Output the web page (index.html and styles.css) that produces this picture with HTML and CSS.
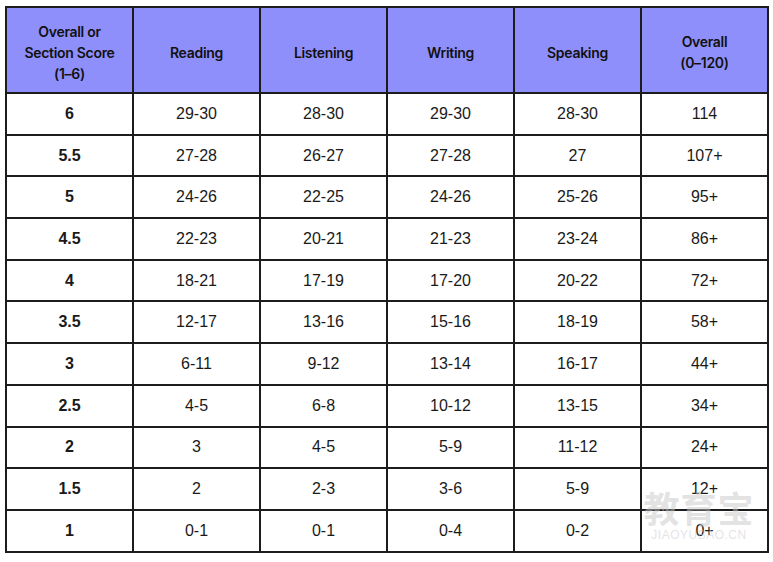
FILE: index.html
```html
<!DOCTYPE html>
<html>
<head>
<meta charset="utf-8">
<link rel="stylesheet" href="styles.css">
</head>
<body>
<div class="wrap">
<table class="scores">
<thead>
<tr>
<th>Overall or<br>Section Score<br>(1–6)</th>
<th>Reading</th>
<th>Listening</th>
<th>Writing</th>
<th>Speaking</th>
<th>Overall<br>(0–120)</th>
</tr>
</thead>
<tbody>
<tr><td class="band">6</td><td>29-30</td><td>28-30</td><td>29-30</td><td>28-30</td><td>114</td></tr>
<tr><td class="band">5.5</td><td>27-28</td><td>26-27</td><td>27-28</td><td>27</td><td>107+</td></tr>
<tr><td class="band">5</td><td>24-26</td><td>22-25</td><td>24-26</td><td>25-26</td><td>95+</td></tr>
<tr><td class="band">4.5</td><td>22-23</td><td>20-21</td><td>21-23</td><td>23-24</td><td>86+</td></tr>
<tr><td class="band">4</td><td>18-21</td><td>17-19</td><td>17-20</td><td>20-22</td><td>72+</td></tr>
<tr><td class="band">3.5</td><td>12-17</td><td>13-16</td><td>15-16</td><td>18-19</td><td>58+</td></tr>
<tr><td class="band">3</td><td>6-11</td><td>9-12</td><td>13-14</td><td>16-17</td><td>44+</td></tr>
<tr><td class="band">2.5</td><td>4-5</td><td>6-8</td><td>10-12</td><td>13-15</td><td>34+</td></tr>
<tr><td class="band">2</td><td>3</td><td>4-5</td><td>5-9</td><td>11-12</td><td>24+</td></tr>
<tr><td class="band">1.5</td><td>2</td><td>2-3</td><td>3-6</td><td>5-9</td><td>12+</td></tr>
<tr><td class="band">1</td><td>0-1</td><td>0-1</td><td>0-4</td><td>0-2</td><td>0+</td></tr>
</tbody>
</table>
<div class="watermark">
<div class="wm-cn">教育宝</div>
<div class="wm-en">JIAOYUBAO.CN</div>
</div>
</div>
</body>
</html>
```

FILE: styles.css
```css
html, body {
  margin: 0;
  padding: 0;
  background: #ffffff;
}
.wrap {
  position: relative;
  padding: 6px 0 0 5px;
}
.scores {
  border-collapse: collapse;
  width: 764px;
  table-layout: fixed;
  font-family: "Liberation Sans", Arial, sans-serif;
  color: #1a1a1a;
}
.scores th, .scores td {
  border: 2px solid #1c1c1c;
  text-align: center;
  vertical-align: middle;
  padding: 0;
}
.scores th {
  background: #8f8ffc;
  font-family: Inter, "Liberation Sans", sans-serif;
  font-weight: 600;
  font-size: 14px;
  line-height: 21px;
  letter-spacing: -0.3px;
  height: 80px;
  padding-top: 4px;
  color: #111;
}
.scores td {
  height: 39.7px;
  font-size: 16px;
}
.scores td.band {
  font-weight: 700;
}
.watermark {
  position: absolute;
  left: 643px;
  top: 486px;
  width: 112px;
  text-align: center;
  color: rgba(200, 200, 200, 0.5);
  font-family: "Noto Sans CJK SC", sans-serif;
  pointer-events: none;
}
.wm-cn {
  font-size: 36px;
  line-height: 42px;
  letter-spacing: 1px;
  font-weight: 700;
}
.wm-en {
  font-family: "Liberation Sans", sans-serif;
  font-size: 12px;
  line-height: 14px;
  letter-spacing: 0.5px;
}
```
